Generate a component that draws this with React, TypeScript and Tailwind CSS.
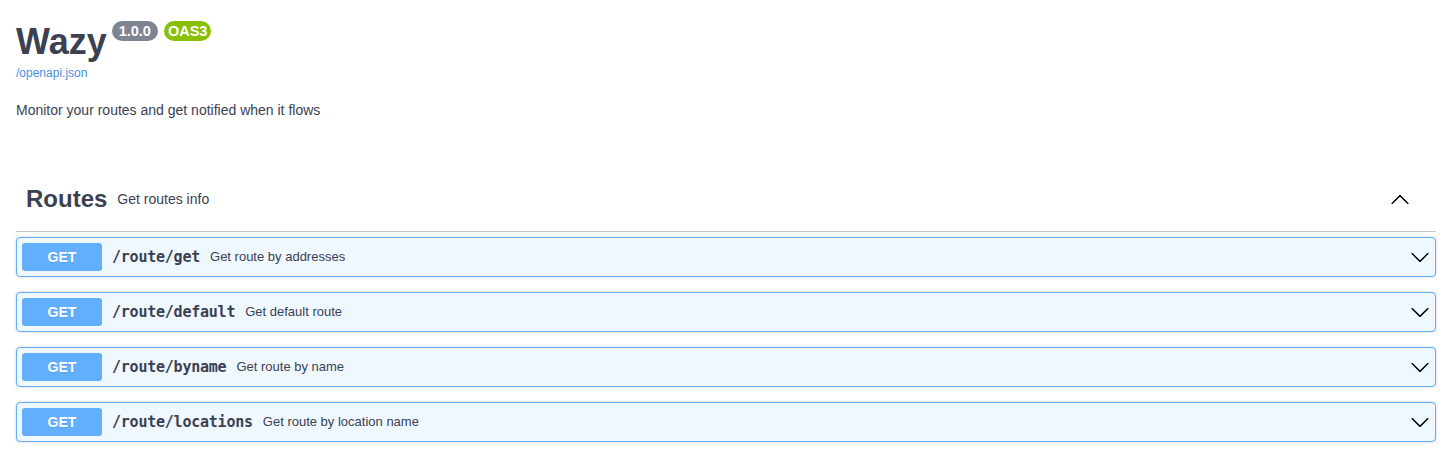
import React from "react";

const ops = [
  { path: "/route/get", summary: "Get route by addresses" },
  { path: "/route/default", summary: "Get default route" },
  { path: "/route/byname", summary: "Get route by name" },
  { path: "/route/locations", summary: "Get route by location name" },
];

function ArrowDown() {
  return (
    <svg width="20" height="20" viewBox="0 0 20 20" className="shrink-0" fill="#000">
      <path d="M17.418 6.109c.272-.268.709-.268.979 0s.271.701 0 .969l-7.908 7.83c-.27.268-.707.268-.979 0l-7.908-7.83c-.27-.268-.27-.701 0-.969.271-.268.709-.268.979 0L10 13.25l7.418-7.141z" />
    </svg>
  );
}

function ArrowUp() {
  return (
    <svg width="20" height="20" viewBox="0 0 20 20" className="shrink-0" fill="#000">
      <path d="M17.418 14.908c.272.268.709.268.979 0s.271-.701 0-.969l-7.908-7.83c-.27-.268-.707-.268-.979 0l-7.908 7.83c-.27.268-.27.701 0 .969.271.268.709.268.979 0L10 7.767l7.418 7.141z" />
    </svg>
  );
}

export default function App() {
  return (
    <div className="min-h-screen bg-white pl-4 pr-[18px] pt-[21px] font-['Liberation_Sans',Arial,sans-serif] text-[#3b4151]">
      {/* info */}
      <div className="flex items-start">
        <h2 className="text-[36px] font-bold leading-[41px]">Wazy</h2>
        <span className="ml-[5px] h-[20px] rounded-full bg-[#7d8492] px-[7px] text-[14.5px] font-bold leading-[20px] text-white">
          1.0.0
        </span>
        <span className="ml-[6px] h-[20px] rounded-full bg-[#89bf04] px-[4px] text-[14.5px] font-bold leading-[20px] text-white">
          OAS3
        </span>
      </div>
      <a href="#" className="mt-1 block text-[12px] leading-[14px] text-[#4990e2]">
        /openapi.json
      </a>
      <p className="mt-[22px] text-[14px] leading-[16px]">Monitor your routes and get notified when it flows</p>

      {/* tag */}
      <div className="mt-[49px] flex h-[65px] items-center border-b border-[#3b4151]/30 pl-[10px] pr-[26px]">
        <h3 className="text-[24px] font-bold leading-[28px]">Routes</h3>
        <span className="ml-[10px] flex-1 text-[14px]">Get routes info</span>
        <ArrowUp />
      </div>

      <div className="mt-[5px] flex flex-col gap-[15px]">
        {ops.map((op) => (
          <div
            key={op.path}
            className="flex items-center rounded-[4px] border border-[#61affe] bg-[#eff7ff] p-[5px] shadow-[0_0_3px_rgba(0,0,0,0.19)]"
          >
            <div className="flex h-[28px] w-[80px] items-center justify-center rounded-[3px] bg-[#61affe] text-[14px] font-bold text-white [text-shadow:0_1px_0_rgba(0,0,0,0.1)]">
              GET
            </div>
            <span className="px-[10px] font-['DejaVu_Sans_Mono',monospace] text-[15px] font-bold tracking-[-0.23px]">
              {op.path}
            </span>
            <span className="flex-1 text-[13px]">{op.summary}</span>
            <ArrowDown />
          </div>
        ))}
      </div>
    </div>
  );
}
